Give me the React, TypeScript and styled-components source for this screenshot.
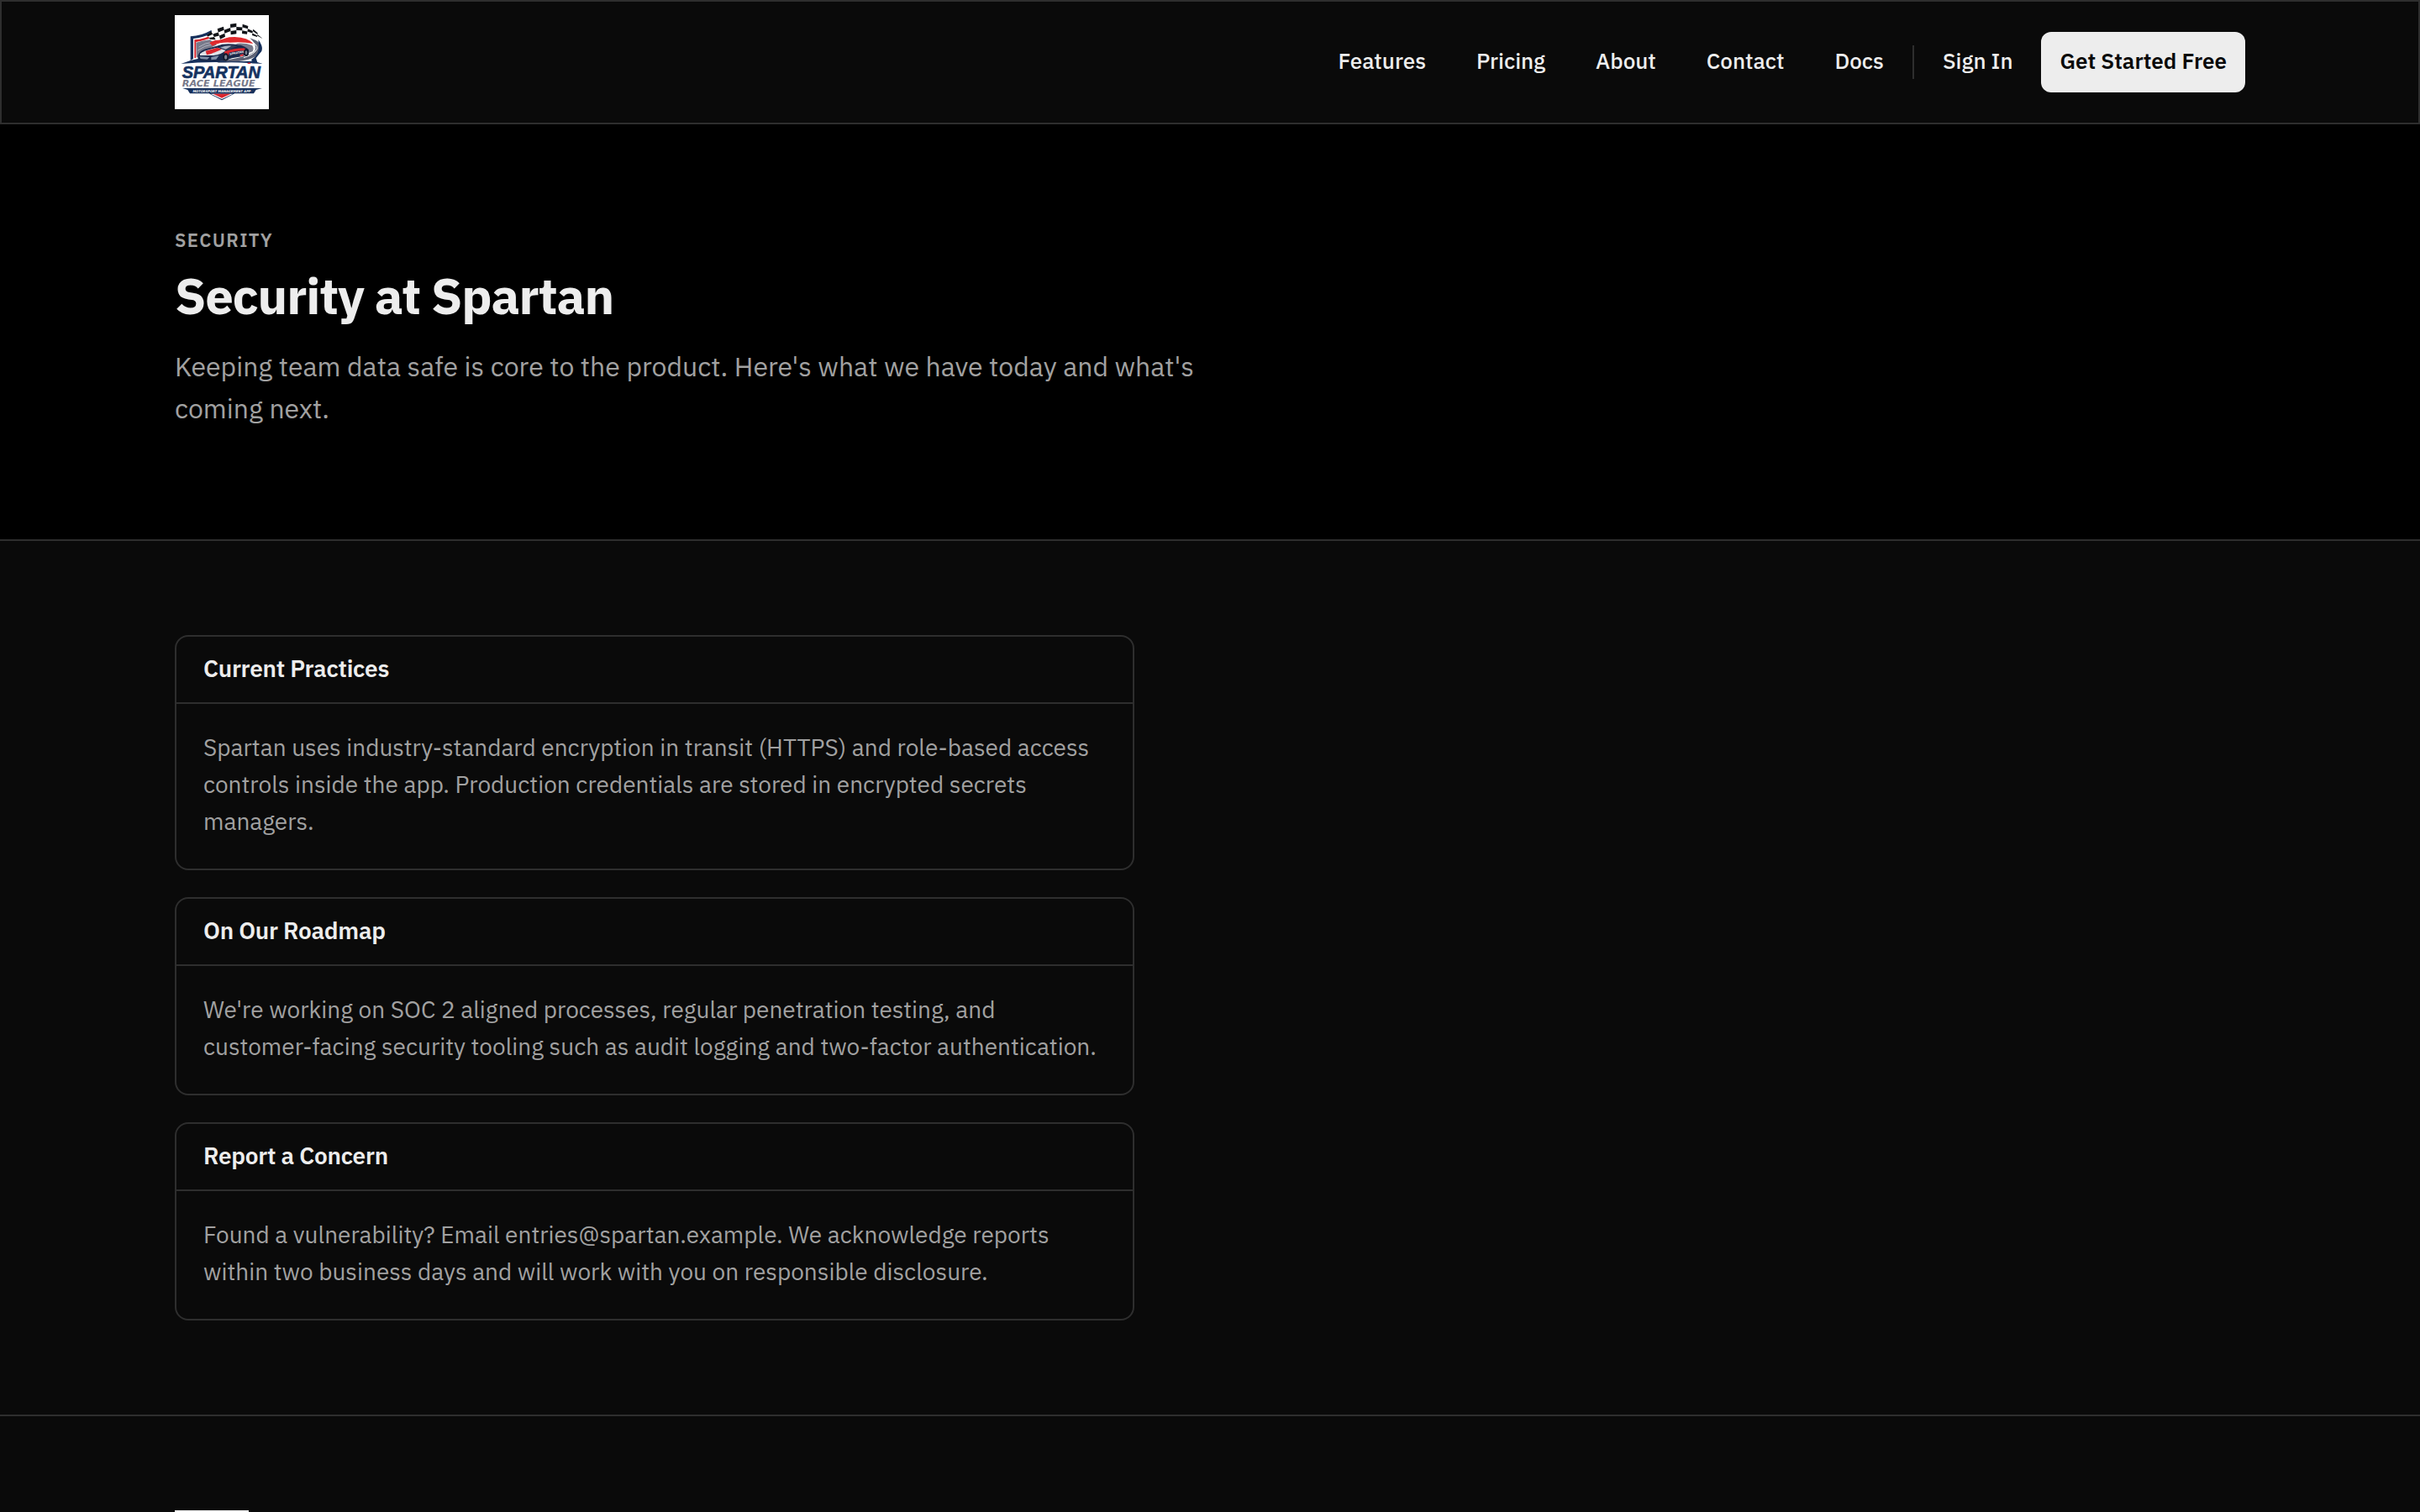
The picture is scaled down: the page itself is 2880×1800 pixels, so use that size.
import React from "react";
import styled, { createGlobalStyle } from "styled-components";

const color = {
  page: "#0a0a0a",
  hero: "#000000",
  line: "#2e2e2e",
  text: "#ededed",
  muted: "#a1a1a1",
};

const GlobalStyle = createGlobalStyle`
  *, *::before, *::after { box-sizing: border-box; }
  body {
    margin: 0;
    background: ${color.page};
    color: ${color.text};
    font-family: "IBM Plex Sans", Roboto, "Noto Sans", sans-serif;
    font-size: 28px;
    line-height: 44px;
  }
  h1, h2, p { margin: 0; }
`;

const Container = styled.div`
  width: 100%;
  max-width: 2560px;
  margin: 0 auto;
  padding: 0 48px;
`;

const Header = styled.header`
  border: 2px solid ${color.line};
  background: ${color.page};
`;

const HeaderRow = styled(Container)`
  display: flex;
  align-items: center;
  justify-content: space-between;
  padding-top: 16px;
  padding-bottom: 16px;
`;

const LogoLink = styled.a<{ $size: number }>`
  display: block;
  width: ${(p) => p.$size}px;
  height: ${(p) => p.$size}px;
  background: #fff;

  svg {
    display: block;
    width: 100%;
    height: 100%;
  }
`;

const Nav = styled.nav`
  display: flex;
  align-items: center;
  gap: 4px;
`;

const NavLink = styled.a`
  padding: 12px 28px 16px;
  color: ${color.text};
  font-size: 26px;
  font-weight: 500;
  text-decoration: none;
`;

const NavDivider = styled.span`
  width: 2px;
  height: 40px;
  margin: 0 2px;
  background: ${color.line};
`;

const CtaButton = styled.button`
  margin-left: 2px;
  padding: 12px 22px 16px;
  border: 0;
  border-radius: 12px;
  background: ${color.text};
  color: ${color.page};
  font: inherit;
  font-size: 26px;
  font-weight: 600;
  cursor: pointer;
`;

const Hero = styled.section`
  padding: 120px 0 131px;
  border-bottom: 2px solid ${color.line};
  background: ${color.hero};
`;

const HeroText = styled.div`
  display: flex;
  flex-direction: column;
  max-width: 1248px;
`;

const Eyebrow = styled.p`
  color: ${color.muted};
  font-size: 22px;
  font-weight: 600;
  line-height: 36px;
  letter-spacing: 0.06em;
  text-transform: uppercase;
`;

const Title = styled.h1`
  margin-top: 12px;
  font-size: 60px;
  font-weight: 700;
  line-height: 72px;
  letter-spacing: -0.02em;
`;

const Lead = styled.p`
  margin-top: 23px;
  color: ${color.muted};
  font-size: 32px;
  line-height: 50px;
`;

const Content = styled.main`
  padding: 112px 0;
`;

const CardList = styled.div`
  display: flex;
  flex-direction: column;
  gap: 32px;
  max-width: 1142px;
`;

const Card = styled.section`
  border: 2px solid ${color.line};
  border-radius: 16px;
`;

const CardTitle = styled.h2`
  padding: 16px 32px 18px;
  border-bottom: 2px solid ${color.line};
  font-size: 28px;
  font-weight: 600;
  line-height: 44px;
  letter-spacing: -0.01em;
`;

const CardBody = styled.p`
  padding: 30px 32px 34px;
  color: ${color.muted};
`;

const Footer = styled.footer`
  padding: 112px 0;
  border-top: 2px solid ${color.line};
`;

const navItems = ["Features", "Pricing", "About", "Contact", "Docs"];

const cards = [
  {
    title: "Current Practices",
    body: "Spartan uses industry-standard encryption in transit (HTTPS) and role-based access controls inside the app. Production credentials are stored in encrypted secrets managers.",
  },
  {
    title: "On Our Roadmap",
    body: "We're working on SOC 2 aligned processes, regular penetration testing, and customer-facing security tooling such as audit logging and two-factor authentication.",
  },
  {
    title: "Report a Concern",
    body: "Found a vulnerability? Email entries@spartan.example. We acknowledge reports within two business days and will work with you on responsible disclosure.",
  },
];

// Upper and lower edges of the waving chequered flag.
const flagTop = [[168, 126], [184, 112], [206, 103], [228, 95], [252, 86], [274, 83], [296, 86], [316, 93], [334, 104], [350, 118], [366, 136]];
const flagBottom = [[180, 140], [200, 142], [216, 140], [234, 131], [254, 124], [274, 121], [294, 120], [312, 122], [330, 126], [348, 132], [366, 138]];
const flagRows = 3;

function flagPoint(column: number, row: number) {
  const t = row / flagRows;
  const [x1, y1] = flagTop[column];
  const [x2, y2] = flagBottom[column];
  return `${x1 + (x2 - x1) * t} ${y1 + (y2 - y1) * t}`;
}

const flagPath = flagTop
  .slice(1)
  .flatMap((_, c) =>
    Array.from({ length: flagRows }, (_row, r) =>
      (c + r) % 2 === 0
        ? `M${flagPoint(c, r)}L${flagPoint(c + 1, r)}L${flagPoint(c + 1, r + 1)}L${flagPoint(c, r + 1)}Z`
        : ""
    )
  )
  .join("");

function Logo({ wordmark = false }: { wordmark?: boolean }) {
  return (
    <svg viewBox="54 54 336 336" role="img" aria-label="Spartan Race League">
      <path d="M110 130Q150 128 184 108L190 118Q152 136 120 138L120 210L110 216Z" fill="#16305c" />
      <path d="M124 142Q160 140 192 122L196 130Q162 146 130 150L130 206L124 208Z" fill="#d6252c" />
      <path d="M130 152Q156 144 180 142L204 160L148 188L132 206Z" fill="#77798a" />
      <path d="M140 168Q164 152 184 152M136 180Q160 162 190 158" fill="none" stroke="#aeb1bd" strokeWidth="3" />
      <path d="M178 152Q220 132 268 132Q316 134 334 156Q292 148 252 152Q214 150 188 164Z" fill="#e02a2e" />
      <path d="M270 156Q304 152 330 162Q338 172 332 184L316 190L312 172Z" fill="#77798a" />
      <path d="M322 136Q362 148 366 172Q366 196 318 212Q270 224 204 224L236 214Q320 202 340 182Q350 160 322 136Z" fill="#5d6275" />
      <path d="M324 146Q350 158 348 174Q340 194 300 206" fill="none" stroke="#fff" strokeWidth="3" />
      <path d="M352 142Q368 160 364 182L344 208L350 226L330 226L328 212Q362 194 352 142Z" fill="#16305c" />
      <path d="M170 126Q184 106 216 104Q246 84 286 84Q334 90 366 138L330 128Q290 122 256 128Q220 144 200 144L184 144Z" fill="#fff" />
      <path d={flagPath} fill="#101318" />
      <path d="M76 228Q112 214 146 208L240 220L336 218L368 228Q210 216 76 228Z" fill="#16305c" />
      <path d="M136 200Q140 184 160 176L204 164Q234 152 280 160Q306 164 318 178L318 194L292 202L258 208L228 218L150 218Q134 214 136 200Z" fill="#18284b" />
      <path d="M144 192Q160 178 206 170L236 180Q220 196 188 198L144 198Z" fill="#dfe2e8" />
      <path d="M164 182L206 170L222 176L184 192L168 196ZM232 184Q264 172 302 172L312 180L276 182L248 188L244 208L228 200Z" fill="#d9262e" />
      <path d="M212 168Q240 156 278 164L244 180Z" fill="#303d59" />
      <path d="M216 170Q238 162 256 164L236 176Z" fill="#aab2c2" />
      <path d="M142 202L178 204L170 212L146 210ZM184 204L212 198L202 212L184 214Z" fill="#8290a8" />
      <ellipse cx="236" cy="204" rx="10" ry="14" fill="#10192c" />
      <ellipse cx="236" cy="204" rx="5" ry="8" fill="#7c8494" />
      <ellipse cx="309" cy="188" rx="8" ry="13" fill="#10192c" />
      <ellipse cx="309" cy="188" rx="4" ry="7" fill="#7c8494" />
      <path d="M286 196L300 192L298 200L288 202Z" fill="#e23a40" />
      <path d="M312 228L320 222L326 228Z" fill="#d9262e" />
      <path d="M82 315L366 315L344 321L336 334L268 334L222 358L176 334L108 334L100 321Z" fill="#16305c" />
      <path d="M182 335L262 335L222 354Z" fill="#fff" />
      <path d="M190 335L254 335L222 350Z" fill="#d9262e" />
      {wordmark && (
        <g fontWeight="700" fontStyle="italic">
          <text x="250" y="197" fill="#fff" fontFamily="Liberation Sans" fontSize="11" transform="rotate(-10 250 197)">SPARTAN</text>
          <text x="80" y="279" fill="#15325f" stroke="#15325f" strokeWidth="2" fontFamily="Liberation Sans" fontSize="60">SPARTAN</text>
          <text x="80" y="310" fill="#77798a" fontFamily="DejaVu Sans" fontSize="34">RACE LEAGUE</text>
          <text x="222" y="329" textAnchor="middle" fill="#fff" fontFamily="DejaVu Sans" fontSize="11">MOTORSPORT MANAGEMENT APP</text>
        </g>
      )}
    </svg>
  );
}

export default function App() {
  return (
    <>
      <GlobalStyle />
      <Header>
        <HeaderRow>
          <LogoLink href="#" $size={112}>
            <Logo wordmark />
          </LogoLink>
          <Nav aria-label="Main">
            {navItems.map((item) => (
              <NavLink key={item} href={`#${item.toLowerCase()}`}>
                {item}
              </NavLink>
            ))}
            <NavDivider />
            <NavLink href="#sign-in">Sign In</NavLink>
            <CtaButton type="button">Get Started Free</CtaButton>
          </Nav>
        </HeaderRow>
      </Header>
      <Hero>
        <Container>
          <HeroText>
            <Eyebrow>Security</Eyebrow>
            <Title>Security at Spartan</Title>
            <Lead>
              Keeping team data safe is core to the product. Here's what we have today and what's coming next.
            </Lead>
          </HeroText>
        </Container>
      </Hero>
      <Content>
        <Container>
          <CardList>
            {cards.map((card) => (
              <Card key={card.title}>
                <CardTitle>{card.title}</CardTitle>
                <CardBody>{card.body}</CardBody>
              </Card>
            ))}
          </CardList>
        </Container>
      </Content>
      <Footer>
        <Container>
          <LogoLink href="#" $size={88}>
            <Logo />
          </LogoLink>
        </Container>
      </Footer>
    </>
  );
}
